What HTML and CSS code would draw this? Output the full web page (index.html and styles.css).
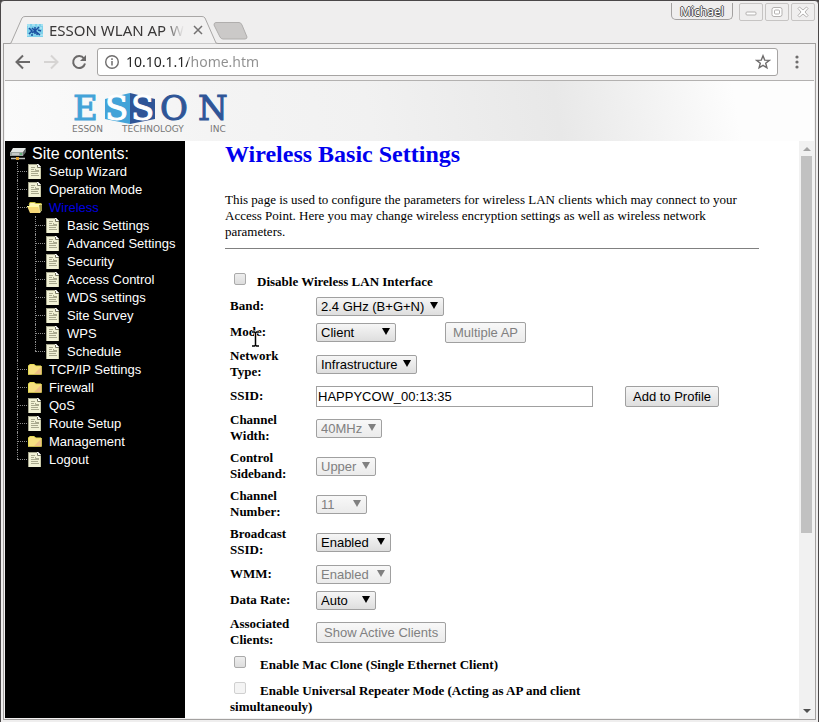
FILE: index.html
```html
<!DOCTYPE html>
<html lang="en">
<head>
<meta charset="utf-8">
<title>ESSON WLAN AP</title>
<link rel="stylesheet" href="styles.css">
</head>
<body>
<svg class="defs" aria-hidden="true">
  <symbol id="doc" viewBox="0 0 16 16">
    <path d="M1 1h10l3 3v12H1z" fill="#f2f2d6"/>
    <path d="M1 1h10v1H2v14H1z" fill="#a5a58c"/>
    <path d="M10 1h1l3 3v1h-4z" fill="#fff"/>
    <path d="M10.500 2v2.500H14" stroke="#77775f" fill="none"/>
    <path d="M4 4.500h4M4 6.500h3M4 8.500h8M4 10.500h7M4 12.500h8M8.500 6v1.500H12" stroke="#a9a98e" fill="none"/>
    <path d="M13.500 5v11" stroke="#c9c9a8"/>
  </symbol>
  <symbol id="folder" viewBox="0 0 16 16">
    <path d="M1 5l2-2h4l2 2h5v9H1z" fill="#f6e080"/>
    <path d="M7 13h7V6z" fill="#eec085"/>
    <path d="M1.500 13V5L3 3.500h4L8.500 5H14" fill="none" stroke="#e4dc50"/>
    <path d="M1 13.500h13.500V5" fill="none" stroke="#c8b850"/>
  </symbol>
  <symbol id="folder-open" viewBox="0 0 16 16">
    <path d="M2 6l1-3h4l2 1h4l2 1v6l-2 3H4z" fill="#fff6b8"/>
    <path d="M2 6l1-2.500h4L9 4.500h5v2" fill="none" stroke="#c8c040"/>
    <path d="M0 7h11l2 7H3z" fill="#f6d878"/>
    <path d="M0 7.500h11" stroke="#ffffa0"/>
    <path d="M12 6h3v5l-2 2z" fill="#a09a4a"/>
  </symbol>
</svg>

<div class="window">
  <header class="titlebar">
    <div class="tab">
      <svg class="tab-shape" viewBox="0 0 208 28" aria-hidden="true"><path d="M0 27.500L1 27 12 2Q13 .500 15 .500H192Q194 .500 195 2L206 27 208 27.500" fill="#f2f1f1" stroke="#a9a7a6"/></svg>
      <svg class="favicon" viewBox="0 0 16 13" aria-hidden="true"><path d="M0 0h16v13H0z" fill="#7fd0ea"/><path d="M0 1h3M5 1h3M10 1h2M14 1h2M0 11h2M13 11h3M1 3h2M13 4h2" stroke="#c9f2fa"/><path d="M2 4l3 3-3 3M5 4l3 3 4-4M8 3v7M5 9l3-2 5 4M11 6l3 1M4 11h2M10 8v3" stroke="#1b4fa0" stroke-width="1.500" fill="none"/></svg>
      <span class="tab-title">ESSON WLAN AP W</span>
      <button class="tab-close" aria-label="Close tab"><svg viewBox="0 0 10 10"><path d="M1 1l8 8M9 1L1 9" stroke="#737171" stroke-width="1.500"/></svg></button>
    </div>
    <button class="newtab" aria-label="New tab"><svg viewBox="0 0 36 18"><path d="M3 .500H26Q28 .500 29 3L34 15Q34 17 32 17H10Q8 17 7 15L1 3Q1 .500 3 .500z" fill="#cbc9c8" stroke="#b0aead"/></svg></button>
    <div class="window-controls">
      <button class="profile">Michael</button>
      <button class="wc" aria-label="Minimize"><svg viewBox="0 0 14 14"><rect x="2" y="7" width="10" height="3" rx="1"/></svg></button>
      <button class="wc" aria-label="Maximize"><svg viewBox="0 0 14 14"><rect x="2" y="2.500" width="10" height="9" rx="2"/><rect x="4.500" y="5" width="5" height="4" rx="1"/></svg></button>
      <button class="wc" aria-label="Close"><svg viewBox="0 0 14 14"><path d="M2 3.500L3.500 2 7 5 10.500 2 12 3.500 9 7l3 3.500L10.500 12 7 9l-3.500 3L2 10.500 5 7z"/></svg></button>
    </div>
  </header>

  <div class="browser">
    <nav class="toolbar" aria-label="Browser">
      <button class="tool" aria-label="Back"><svg viewBox="0 0 16 16"><path d="M15 8H2M8 1.500L1.500 8 8 14.500" fill="none" stroke="#6b6969" stroke-width="2"/></svg></button>
      <button class="tool" aria-label="Forward" disabled><svg viewBox="0 0 16 16"><path d="M1 8h13M8 1.500L14.500 8 8 14.500" fill="none" stroke="#d6d4d3" stroke-width="2"/></svg></button>
      <button class="tool" aria-label="Reload"><svg viewBox="0 0 16 16"><path d="M13 4.500A6 6 0 1 0 14 9.500" fill="none" stroke="#6b6969" stroke-width="2"/><path d="M15 1v6H9z" fill="#6b6969"/></svg></button>
      <div class="omnibox">
        <svg viewBox="0 0 16 16" aria-hidden="true"><circle cx="8" cy="8" r="6.300" fill="none" stroke="#6f6d6d" stroke-width="1.400"/><path d="M8 7v4.500M8 4.300V6" stroke="#6f6d6d" stroke-width="1.500"/></svg>
        <input class="url" type="text" aria-label="Address" value="10.10.1.1/home.htm">
        <svg viewBox="0 0 16 16" aria-hidden="true"><path d="M8 1.800l1.700 4.300 4.600.300-3.600 2.900 1.200 4.500L8 11.300l-3.900 2.500 1.200-4.500-3.600-2.900 4.600-.300z" fill="none" stroke="#6f6d6d" stroke-width="1.400"/></svg>
      </div>
      <button class="menu" aria-label="Menu"><svg viewBox="0 0 4 16"><circle cx="2" cy="3" r="1.600"/><circle cx="2" cy="8" r="1.600"/><circle cx="2" cy="13" r="1.600"/></svg></button>
    </nav>

    <div class="banner">
      <svg class="logo" viewBox="0 0 164 40" role="img" aria-label="ESSON Technology Inc">
        <path d="M33 6L58 0v31L33 26z" fill="#43a3d8"/>
        <path d="M58 0l25 6v20l-25 5z" fill="#2f5597"/>
        <text class="word sky" x="1" y="27">E</text>
        <text class="word white" x="33" y="27">S</text>
        <text class="word white" x="59" y="27">S</text>
        <text class="word navy" x="88" y="27">O</text>
        <text class="word navy" x="126" y="27">N</text>
        <text class="tagline" x="0" y="39">ESSON</text>
        <text class="tagline" x="50" y="39">TECHNOLOGY</text>
        <text class="tagline" x="138" y="39">INC</text>
      </svg>
    </div>

    <div class="frames">
      <nav class="sidebar" aria-label="Site contents">
        <div class="root">
          <svg viewBox="0 0 18 16" aria-hidden="true"><path d="M3 2h13l-3 5H0z" fill="#e4e8e6"/><path d="M0 6h13v4H0z" fill="#9ba3a0"/><path d="M13 6l3-4v4l-3 4z" fill="#5e6664"/><path d="M2 8h7" stroke="#eee"/><path d="M10 8h2" stroke="#27c050"/><path d="M1 12.500h14" stroke="#c0c4c0" stroke-width="1.500"/><path d="M6 11h3v3H6z" fill="#e0a030"/></svg>
          <span>Site contents:</span>
        </div>
        <ul class="tree">
          <li><a href="#"><svg><use href="#doc"/></svg>Setup Wizard</a></li>
          <li><a href="#"><svg><use href="#doc"/></svg>Operation Mode</a></li>
          <li><a href="#" class="current"><svg><use href="#folder-open"/></svg>Wireless</a>
            <ul>
              <li><a href="#"><svg><use href="#doc"/></svg>Basic Settings</a></li>
              <li><a href="#"><svg><use href="#doc"/></svg>Advanced Settings</a></li>
              <li><a href="#"><svg><use href="#doc"/></svg>Security</a></li>
              <li><a href="#"><svg><use href="#doc"/></svg>Access Control</a></li>
              <li><a href="#"><svg><use href="#doc"/></svg>WDS settings</a></li>
              <li><a href="#"><svg><use href="#doc"/></svg>Site Survey</a></li>
              <li><a href="#"><svg><use href="#doc"/></svg>WPS</a></li>
              <li><a href="#"><svg><use href="#doc"/></svg>Schedule</a></li>
            </ul>
          </li>
          <li><a href="#"><svg><use href="#folder"/></svg>TCP/IP Settings</a></li>
          <li><a href="#"><svg><use href="#folder"/></svg>Firewall</a></li>
          <li><a href="#"><svg><use href="#doc"/></svg>QoS</a></li>
          <li><a href="#"><svg><use href="#doc"/></svg>Route Setup</a></li>
          <li><a href="#"><svg><use href="#folder"/></svg>Management</a></li>
          <li><a href="#"><svg><use href="#doc"/></svg>Logout</a></li>
        </ul>
      </nav>

      <main class="page">
        <h1>Wireless Basic Settings</h1>
        <p>This page is used to configure the parameters for wireless LAN clients which may connect to your Access Point. Here you may change wireless encryption settings as well as wireless network parameters.</p>
        <hr>
        <form class="settings">
          <div class="check first"><input type="checkbox" id="disable"><label for="disable">Disable Wireless LAN Interface</label></div>
          <div class="row"><label for="band">Band:</label><span class="select w128"><select id="band"><option>2.4 GHz (B+G+N)</option></select></span></div>
          <div class="row"><label for="mode">Mode:</label><span class="select w80 before-button"><select id="mode"><option>Client</option></select></span><button type="button" disabled>Multiple AP</button>
            <svg class="cursor" viewBox="0 0 9 18" aria-hidden="true"><path d="M1 2h2.500l1 1 1-1H8M4.500 3v12M1 16h2.500l1-1 1 1H8" fill="none" stroke="#fff" stroke-width="3"/><path d="M1 2h2.500l1 1 1-1H8M4.500 3v12M1 16h2.500l1-1 1 1H8" fill="none" stroke="#000" stroke-width="1.500"/></svg>
          </div>
          <div class="row"><label for="net">Network Type:</label><span class="select w101"><select id="net"><option>Infrastructure</option></select></span></div>
          <div class="row"><label for="ssid">SSID:</label><input type="text" id="ssid" value="HAPPYCOW_00:13:35"><button type="button">Add to Profile</button></div>
          <div class="row"><label for="width">Channel Width:</label><span class="select w66 off"><select id="width" disabled><option>40MHz</option></select></span></div>
          <div class="row"><label for="side">Control Sideband:</label><span class="select w60 off"><select id="side" disabled><option>Upper</option></select></span></div>
          <div class="row"><label for="chan">Channel Number:</label><span class="select w51 off"><select id="chan" disabled><option>11</option></select></span></div>
          <div class="row"><label for="bcast">Broadcast SSID:</label><span class="select w75"><select id="bcast"><option>Enabled</option></select></span></div>
          <div class="row"><label for="wmm">WMM:</label><span class="select w75 off"><select id="wmm" disabled><option>Enabled</option></select></span></div>
          <div class="row"><label for="rate">Data Rate:</label><span class="select w60"><select id="rate"><option>Auto</option></select></span></div>
          <div class="row"><label for="clients">Associated Clients:</label><button type="button" id="clients" disabled>Show Active Clients</button></div>
          <div class="check"><input type="checkbox" id="clone"><label for="clone">Enable Mac Clone (Single Ethernet Client)</label></div>
          <div class="check"><input type="checkbox" id="repeater" disabled><label for="repeater">Enable Universal Repeater Mode (Acting as AP and client simultaneouly)</label></div>
        </form>
      </main>

      <div class="scrollbar" aria-hidden="true">
        <i class="arrow up"></i>
        <div class="track"><div class="thumb"></div></div>
        <i class="arrow down"></i>
      </div>
    </div>
  </div>
</div>
</body>
</html>
```
FILE: styles.css
```css
* { box-sizing: border-box; }

body {
  margin: 0;
  background: #4a4748;
  font-family: "Liberation Sans", Arial, sans-serif;
  font-size: 13px;
}

button { font-family: inherit; padding: 0; }
svg { display: block; flex: none; }
.defs { position: absolute; width: 0; height: 0; }

.window {
  min-height: 100vh;
  display: flex;
  flex-direction: column;
  padding: 0 2px 2px;
  background: #efeeee;
  border: 1px solid #4a4748;
  border-radius: 4px 4px 0 0;
}

/* Title bar */
.titlebar {
  display: flex;
  height: 42px;
  padding: 0 1px 0 7px;
}

.tab {
  position: relative;
  z-index: 1;
  display: flex;
  align-items: center;
  width: 208px;
  height: 28px;
  margin-top: 15px;
  padding: 0 19px 0 17px;
}

.tab-shape { position: absolute; left: 0; top: 0; width: 208px; height: 28px; }
.favicon { position: relative; width: 16px; height: 13px; margin-right: 6px; }

.tab-title {
  position: relative;
  flex: 1;
  white-space: nowrap;
  font: 15px/20px "Noto Sans", "Open Sans", sans-serif;
  color: #3a3838;
  mask-image: linear-gradient(to right, #000 86%, transparent);
}

.tab-close { position: relative; border: 0; background: none; margin-left: 9px; }
.tab-close svg { width: 10px; height: 10px; }
.newtab { border: 0; background: none; align-self: flex-start; margin: 21px 0 0 -5px; }
.newtab svg { width: 36px; height: 18px; }

.window-controls { display: flex; gap: 2px; margin: 2px 0 0 auto; }

.profile {
  width: 62px;
  height: 17px;
  margin-right: 4px;
  border: 1px solid #a3a1a0;
  border-top: 0;
  border-radius: 0 0 5px 5px;
  background: none;
  color: #fff;
  font: 12px/18px "Noto Sans", sans-serif;
  text-shadow: 1px 0 #555, -1px 0 #555, 0 1px #555, 0 -1px #555;
}

.wc {
  display: grid;
  place-items: center;
  width: 24px;
  height: 18px;
  border: 1px solid #c6c4c3;
  border-radius: 2px;
  background: none;
}
.wc svg { width: 14px; height: 14px; fill: #fff; stroke: #b3b1b0; }

/* Browser chrome */
.browser {
  flex: 1;
  display: flex;
  flex-direction: column;
  border: 1px solid #a3a1a0;
  padding: 0 1px 1px;
  background: #f2f1f1;
}

.toolbar {
  display: flex;
  align-items: center;
  gap: 12px;
  height: 37px;
  padding: 0 15px 0 10px;
  border-bottom: 1px solid #b3b1b0;
}
.tool { border: 0; background: none; }
.tool svg { width: 16px; height: 16px; }

.omnibox {
  flex: 1;
  display: flex;
  align-items: center;
  gap: 6px;
  height: 28px;
  margin: 0 5px 0 -2px;
  padding: 0 6px;
  border: 1px solid #a6a4a3;
  border-radius: 3px;
  background: #fff;
}
.omnibox svg { width: 16px; height: 16px; }

.url {
  flex: 1;
  min-width: 0;
  border: 0;
  padding: 0;
  font: 14px/20px "Noto Sans", "Open Sans", sans-serif;
  color: transparent;
  background: linear-gradient(to right, #222 62px, #8f8f8f 62px);
  background-clip: text;
  -webkit-background-clip: text;
}

.menu { border: 0; background: none; }
.menu svg { width: 4px; height: 16px; fill: #6f6d6d; }

.banner {
  height: 60px;
  padding: 12px 0 0 67px;
  background: linear-gradient(80deg, #fbfbfb 0%, #f4f4f4 25%, #f1f1f1 45%, #e8e8e8 68%, #f3f3f3 80%, #fdfdfd 90%);
}
.logo { width: 164px; height: 40px; }
.word { font: 34px "DejaVu Serif", serif; stroke-width: 1px; }
.sky { fill: #43a3d8; stroke: #43a3d8; }
.white { fill: #fff; stroke: #fff; }
.navy { fill: #2f5597; stroke: #2f5597; }
.tagline { font: 9px "DejaVu Sans", sans-serif; fill: #777; }

/* Frames */
.frames { flex: 1; display: flex; background: #fff; }

.sidebar {
  width: 180px;
  padding: 5px 0 0 5px;
  background: #000;
  color: #fff;
}
.root { display: flex; align-items: center; height: 16px; gap: 4px; font-size: 16px; }
.root svg { width: 18px; height: 16px; }

ul { list-style: none; margin: 0; padding: 0; }
.tree { padding-left: 7px; }
.tree ul { padding-left: 18px; }
.tree li { position: relative; }
.tree li::before {
  content: "";
  position: absolute;
  left: 0;
  top: 0;
  height: 100%;
  border-left: 1px dotted #8c8c8c;
}
.tree li:last-child::before { height: 9px; }
.tree a {
  display: flex;
  align-items: center;
  height: 18px;
  color: #fff;
  text-decoration: none;
}
.tree a::before { content: ""; width: 10px; border-top: 1px dotted #8c8c8c; }
.tree a svg { width: 16px; height: 16px; margin-right: 6px; }
.tree .current { color: #0000e0; }

.page {
  flex: 1;
  min-width: 0;
  padding: 0 40px;
  font: 13px/16px "Liberation Serif", "Times New Roman", serif;
  color: #000;
}
h1 { margin: 0; font-size: 24px; line-height: 27px; color: #00e; }
.page p { margin: 24px 0 8px; }
hr { margin: 0; border: 0; border-top: 1px solid #808080; }

.settings { padding: 20px 5px 0; font-weight: bold; }
.row { position: relative; display: flex; align-items: center; min-height: 26px; padding: 3px 0; }
.row:has(> input) { padding: 2px 0; }
.row > label { width: 86px; padding-right: 20px; }

.check { max-width: 400px; padding: 5px 0 3px; min-height: 26px; }
.check input {
  appearance: none;
  width: 12px;
  height: 12px;
  margin: 0 14px 0 4px;
  vertical-align: 1px;
  border: 1px solid #aaa;
  border-radius: 2px;
  background: linear-gradient(#eee, #ddd);
}
.check.first { padding: 4px 0 0; min-height: 24px; }
.check.first input { margin-right: 11px; }
.check input:disabled { border-color: #d0d0d0; background: #f4f4f4; }

.select { position: relative; height: 19px; }
.select::after {
  content: "";
  position: absolute;
  right: 6px;
  top: 5px;
  border: 4px solid transparent;
  border-top: 7px solid #000;
  border-bottom: 0;
}
.select.off::after { border-top-color: #808080; }
select {
  appearance: none;
  display: block;
  width: 100%;
  height: 100%;
  padding: 0 4px;
  font: 13px/17px "Liberation Sans", Arial, sans-serif;
  color: #000;
  border: 1px solid #a0a0a0;
  border-radius: 2px;
  background: linear-gradient(#f6f6f6, #dedede);
}
select:disabled { color: #808080; opacity: 1; background: linear-gradient(#f8f8f8, #ebebeb); }
.w128 { width: 128px; }
.w101 { width: 101px; }
.w80 { width: 80px; }
.w75 { width: 75px; }
.w66 { width: 66px; }
.w60 { width: 60px; }
.w51 { width: 51px; }
.before-button { margin-right: 49px; }

.settings input[type="text"] {
  width: 277px;
  height: 21px;
  margin-right: 32px;
  padding: 0 1px;
  border: 1px solid #a0a0a0;
  font: 13px/19px "Liberation Sans", Arial, sans-serif;
}
.settings button {
  height: 21px;
  margin: -1px 0;
  padding: 0 7px;
  border: 1px solid #a0a0a0;
  border-radius: 2px;
  background: linear-gradient(#f6f6f6, #dedede);
  font: 13px/19px "Liberation Sans", Arial, sans-serif;
  color: #000;
}
.settings button:disabled { color: #808080; background: linear-gradient(#f8f8f8, #ebebeb); }

/* Text pointer hovering over the form */
.cursor { position: absolute; left: 21px; top: 11px; width: 9px; height: 18px; }

.scrollbar {
  display: flex;
  flex-direction: column;
  width: 15px;
  background: #f1f1f1;
  padding: 0 2px;
}
.track { flex: 1; }
.thumb { height: 69%; background: #c1c1c1; }
.arrow { align-self: center; border: 4px solid transparent; }
.arrow.up { border-top: 0; border-bottom-color: #a3a3a3; margin: 6px 0 5px; }
.arrow.down { border-bottom: 0; border-top-color: #505050; margin: 6px 0 5px; }
```
